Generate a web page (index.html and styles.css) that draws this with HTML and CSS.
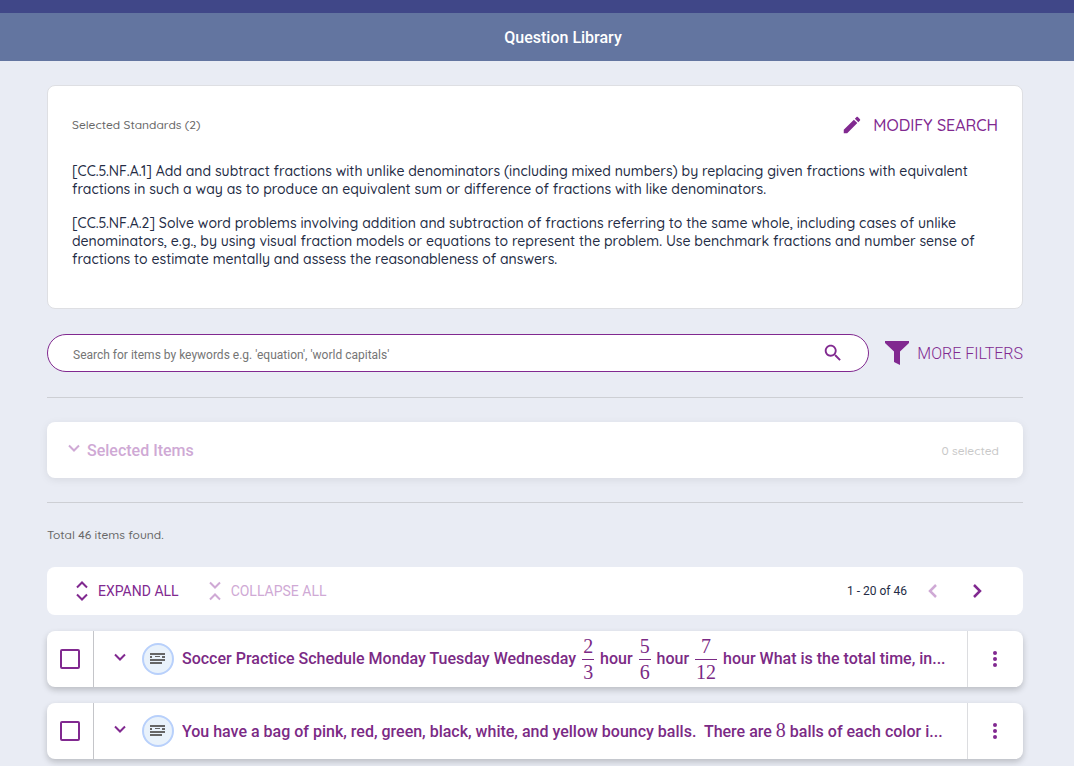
FILE: index.html
```html
<!DOCTYPE html>
<html lang="en">
  <head>
    <meta charset="utf-8">
    <meta name="viewport" content="width=device-width, initial-scale=1">
    <title>Question Library</title>
    <link rel="stylesheet" href="styles.css">
  </head>
  <body>
    <div class="top-strip"></div>
    <header class="header">
      <h1>Question Library</h1>
    </header>

    <main class="content">
      <section class="standards">
        <div class="standards-head">
          <span class="label">Selected Standards (2)</span>
          <button class="text-btn modify" type="button">
            <svg width="22" height="22" viewBox="0 0 24 24" fill="currentColor"><path d="M3 17.25V21h3.75L17.81 9.94l-3.75-3.75L3 17.25zM20.71 7.04c.39-.39.39-1.02 0-1.41l-2.34-2.34c-.39-.39-1.02-.39-1.41 0l-1.83 1.83 3.75 3.75 1.83-1.83z"/></svg>
            MODIFY SEARCH
          </button>
        </div>
        <p>[CC.5.NF.A.1] Add and subtract fractions with unlike denominators (including mixed numbers) by replacing given fractions with equivalent fractions in such a way as to produce an equivalent sum or difference of fractions with like denominators.</p>
        <p>[CC.5.NF.A.2] Solve word problems involving addition and subtraction of fractions referring to the same whole, including cases of unlike denominators, e.g., by using visual fraction models or equations to represent the problem. Use benchmark fractions and number sense of fractions to estimate mentally and assess the reasonableness of answers.</p>
      </section>

      <div class="search-row">
        <form class="search">
          <input type="text" aria-label="Search for items" placeholder="Search for items by keywords e.g. 'equation', 'world capitals'">
          <button type="button" aria-label="Search">
            <svg width="22" height="22" viewBox="0 0 24 24" fill="currentColor"><path d="M15.5 14h-.79l-.28-.27C15.41 12.59 16 11.11 16 9.5 16 5.91 13.09 3 9.5 3S3 5.91 3 9.5 5.91 16 9.5 16c1.61 0 3.09-.59 4.23-1.57l.27.28v.79l5 4.99L20.49 19l-4.99-5zm-6 0C7.01 14 5 11.99 5 9.5S7.01 5 9.5 5 14 7.01 14 9.5 11.99 14 9.5 14z"/></svg>
          </button>
        </form>
        <button class="text-btn filters" type="button">
          <svg width="24" height="24" viewBox="0 0 24 24" fill="currentColor"><path d="M0 0h24v2l-9 8.500V24l-6-3V10.500L0 2z"/></svg>
          MORE FILTERS
        </button>
      </div>

      <section class="selected">
        <button class="selected-toggle" type="button" disabled>
          <svg width="12" height="12" viewBox="0 0 12 12" fill="none" stroke="currentColor" stroke-width="2"><path d="M1 1.500l5 5 5-5"/></svg>
          Selected Items
        </button>
        <span class="selected-count">0 selected</span>
      </section>

      <p class="total label">Total 46 items found.</p>

      <div class="toolbar">
        <button class="text-btn expand" type="button">
          <svg width="12" height="20" viewBox="0 0 12 20" fill="none" stroke="currentColor" stroke-width="2"><path d="M1 6.500l5-5 5 5M1 13.500l5 5 5-5"/></svg>
          EXPAND ALL
        </button>
        <button class="text-btn expand" type="button" disabled>
          <svg width="12" height="20" viewBox="0 0 12 20" fill="none" stroke="currentColor" stroke-width="2"><path d="M1 1.500l5 5 5-5M1 18.500l5-5 5 5"/></svg>
          COLLAPSE ALL
        </button>
        <div class="pager">
          <span>1 - 20 of 46</span>
          <button type="button" aria-label="Previous page" disabled>
            <svg width="10" height="14" viewBox="0 0 10 14" fill="none" stroke="currentColor" stroke-width="2.500"><path d="M8 1L2 7l6 6"/></svg>
          </button>
          <button type="button" aria-label="Next page">
            <svg width="10" height="14" viewBox="0 0 10 14" fill="none" stroke="currentColor" stroke-width="2.500"><path d="M2 1l6 6-6 6"/></svg>
          </button>
        </div>
      </div>

      <div class="item">
        <div class="item-check">
          <input type="checkbox" aria-label="Select Soccer Practice Schedule">
        </div>
        <button class="item-toggle" type="button" aria-label="Expand item">
          <svg width="12" height="12" viewBox="0 0 12 12" fill="none" stroke="currentColor" stroke-width="2"><path d="M1 1.500l5 5 5-5"/></svg>
        </button>
        <span class="item-type">
          <svg width="16" height="12" viewBox="0 0 16 12" fill="#666"><path d="M0 0h15v2H0zM0 3h2v2H0zM5 3h5v1H5zM12 3h3v2h-3zM0 6h15v2H0zM0 9h12v2H0z"/></svg>
        </span>
        <div class="item-title">Soccer Practice Schedule Monday Tuesday Wednesday <span class="frac"><span>2</span><span>3</span></span> hour <span class="frac"><span>5</span><span>6</span></span> hour <span class="frac"><span>7</span><span>12</span></span> hour What is the total time, in...</div>
        <button class="item-menu" type="button" aria-label="More options">
          <svg width="4" height="16" viewBox="0 0 4 16" fill="currentColor"><circle cx="2" cy="2" r="2"/><circle cx="2" cy="8" r="2"/><circle cx="2" cy="14" r="2"/></svg>
        </button>
      </div>

      <div class="item">
        <div class="item-check">
          <input type="checkbox" aria-label="Select bouncy balls question">
        </div>
        <button class="item-toggle" type="button" aria-label="Expand item">
          <svg width="12" height="12" viewBox="0 0 12 12" fill="none" stroke="currentColor" stroke-width="2"><path d="M1 1.500l5 5 5-5"/></svg>
        </button>
        <span class="item-type">
          <svg width="16" height="12" viewBox="0 0 16 12" fill="#666"><path d="M0 0h15v2H0zM0 3h2v2H0zM5 3h5v1H5zM12 3h3v2h-3zM0 6h15v2H0zM0 9h12v2H0z"/></svg>
        </span>
        <div class="item-title">You have a bag of pink, red, green, black, white, and yellow bouncy balls.&nbsp; There are <span class="math">8</span> balls of each color i...</div>
        <button class="item-menu" type="button" aria-label="More options">
          <svg width="4" height="16" viewBox="0 0 4 16" fill="currentColor"><circle cx="2" cy="2" r="2"/><circle cx="2" cy="8" r="2"/><circle cx="2" cy="14" r="2"/></svg>
        </button>
      </div>
    </main>
  </body>
</html>
```

FILE: styles.css
```css
* {
  box-sizing: border-box;
}

body {
  margin: 0;
  background-color: #e9ecf4;
  color: #242c45;
  font-family: Roboto, "Liberation Sans", sans-serif;
  font-size: 16px;
}

button {
  display: flex;
  align-items: center;
  justify-content: center;
  padding: 0;
  border: 0;
  background: none;
  color: #812990;
  font: inherit;
  cursor: pointer;
}

button:disabled {
  color: #cfa9d5;
  cursor: default;
}

svg {
  flex: none;
}

.top-strip {
  height: 13px;
  background-color: #404788;
}

.header {
  display: flex;
  align-items: center;
  justify-content: center;
  height: 48px;
  padding-left: 52px;
  background-color: #6375a0;
  color: #fff;
}

.header h1 {
  margin: 0;
  font-size: 16px;
  font-weight: 500;
}

.content {
  padding: 24px 51px 7px 47px;
}

.label {
  color: #666;
  font-family: Quicksand, Lato, sans-serif;
  font-size: 12px;
  font-weight: 500;
}

.text-btn {
  font-weight: 400;
  white-space: nowrap;
}

/* standards card */
.standards {
  padding: 24px 24px 32px;
  border: 1px solid #dedfe3;
  border-radius: 8px;
  background-color: #fff;
  font-family: Quicksand, Lato, sans-serif;
  font-size: 14px;
  font-weight: 500;
  line-height: 18px;
}

.standards-head {
  display: flex;
  align-items: center;
  justify-content: space-between;
  height: 30px;
  margin-bottom: 22px;
}

.standards p {
  margin: 0 0 16px;
}

.standards p:last-child {
  margin-bottom: 8px;
}

.modify {
  gap: 10px;
  font-size: 16px;
  font-weight: 500;
}

/* search */
.search-row {
  display: flex;
  align-items: center;
  gap: 16px;
  margin: 25px 0;
}

.search {
  display: flex;
  flex: 1;
  height: 38px;
  padding: 0 24px 0 25px;
  border: 1px solid #812990;
  border-radius: 19px;
  background-color: #fff;
}

.search input {
  flex: 1;
  min-width: 0;
  padding: 3px 0 0;
  border: 0;
  outline: 0;
  background: none;
  font: 12px Roboto, sans-serif;
}

.search input::placeholder {
  color: #757575;
}

.filters {
  gap: 8px;
  font-weight: 300;
}

/* selected items */
.selected {
  position: relative;
  display: flex;
  align-items: center;
  justify-content: space-between;
  height: 56px;
  margin: 50px 0 49px;
  padding: 0 24px 0 21px;
  border-radius: 8px;
  background-color: #fff;
  box-shadow: 0 2px 8px rgba(0, 0, 0, 0.08);
}

.selected::before,
.selected::after {
  content: "";
  position: absolute;
  right: 0;
  left: 0;
  height: 1px;
  background-color: #cdcfd4;
}

.selected::before {
  top: -25px;
}

.selected::after {
  bottom: -25px;
}

.selected-toggle {
  gap: 7px;
  font-weight: 500;
}

.selected-count {
  color: #c8c8c8;
  font-family: Quicksand, Lato, sans-serif;
  font-size: 12px;
  font-weight: 500;
}

.total {
  margin: 0 0 24px;
  line-height: 16px;
}

/* toolbar */
.toolbar {
  display: flex;
  align-items: center;
  gap: 30px;
  height: 48px;
  margin-bottom: 16px;
  padding: 0 32px 0 29px;
  border-radius: 8px;
  background-color: #fff;
}

.expand {
  gap: 10px;
  font-size: 14px;
}

.pager {
  display: flex;
  align-items: center;
  gap: 16px;
  margin-left: auto;
  font-size: 12px;
}

.pager span {
  margin-right: -4px;
}

.pager button {
  width: 28px;
  height: 28px;
}

/* question rows */
.item {
  display: flex;
  align-items: center;
  height: 56px;
  margin-bottom: 16px;
  border-radius: 8px;
  background-color: #fff;
  box-shadow: 0 3px 6px rgba(0, 0, 0, 0.2);
  color: #7b2a85;
}

.item:last-child {
  margin-bottom: 0;
}

.item-check {
  display: flex;
  align-items: center;
  justify-content: center;
  width: 47px;
  height: 100%;
  border-right: 1px solid #c4c5c9;
}

.item-check input {
  appearance: none;
  width: 20px;
  height: 20px;
  margin: 0;
  border: 2px solid #812990;
  border-radius: 2px;
}

.item-check input:checked {
  background-color: #812990;
}

.item-toggle {
  width: 48px;
  height: 48px;
  padding-left: 3px;
}

.item-type {
  display: flex;
  flex: none;
  align-items: center;
  justify-content: center;
  width: 32px;
  height: 32px;
  margin-right: 8px;
  border: 2px solid #b8d0fb;
  border-radius: 50%;
  background-color: #e9f2fb;
}

.item-title {
  flex: 1;
  min-width: 0;
  overflow: hidden;
  font-weight: 500;
  line-height: 26px;
  white-space: nowrap;
  text-overflow: ellipsis;
}

.item-menu {
  width: 56px;
  height: 100%;
  padding-right: 2px;
  border-left: 1px solid #dcdde0;
}

.math,
.frac {
  font-family: "Liberation Serif", serif;
  font-size: 20px;
  font-weight: 400;
}

.frac {
  display: inline-flex;
  flex-direction: column;
  margin: 0 2px;
  line-height: 25px;
  text-align: center;
  vertical-align: middle;
}

.frac span {
  padding: 0 1px;
}

.frac span + span {
  border-top: 1px solid #7b2a85;
}
```
